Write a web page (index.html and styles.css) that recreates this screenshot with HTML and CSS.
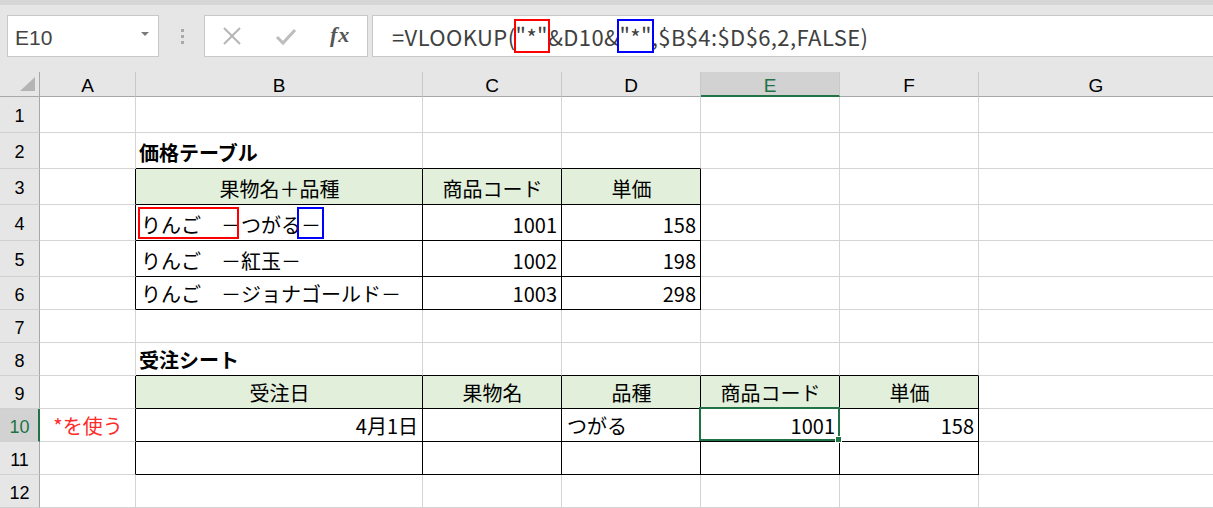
FILE: index.html
```html
<!DOCTYPE html>
<html lang="ja">
<head>
<meta charset="utf-8">
<title>VLOOKUP</title>
<link rel="stylesheet" href="styles.css">
</head>
<body>
<div class="app">
  <div class="topband"></div>
  <div class="fbar">
    <div class="namebox">
      <span class="name">E10</span>
      <svg class="dd" width="8" height="5" viewBox="0 0 8 5"><path d="M0 0H8L4 4Z" fill="#7a7a7a"/></svg>
    </div>
    <div class="dots"><i></i><i></i><i></i></div>
    <div class="btns">
      <svg class="ico" width="20" height="20" viewBox="0 0 20 20"><path d="M2 2L18 18M18 2L2 18" stroke="#b5b5b5" stroke-width="2" fill="none"/></svg>
      <svg class="ico" width="22" height="20" viewBox="0 0 22 20"><path d="M2 10L8 16L20 3" stroke="#bdbdbd" stroke-width="3" fill="none"/></svg>
      <span class="fx">fx</span>
    </div>
    <div class="formula">
      <span class="ftext">=VLOOKUP(<span class="fbox red">"*"</span>&amp;D10&amp;<span class="fbox blue">"*"</span>,$B$4:$D$6,2,FALSE)</span>
    </div>
  </div>
  <div class="sheet">
    <!-- header -->
    <div class="corner"><svg width="18" height="16" viewBox="0 0 18 16"><path d="M17 1V15H2Z" fill="#b4b4b4"/></svg></div>
    <div class="ch">A</div><div class="ch">B</div><div class="ch">C</div><div class="ch">D</div><div class="ch sel">E</div><div class="ch">F</div><div class="ch">G</div>
    <!-- 1 -->
    <div class="rh">1</div><div class="c"></div><div class="c"></div><div class="c"></div><div class="c"></div><div class="c"></div><div class="c"></div><div class="c"></div>
    <!-- 2 -->
    <div class="rh">2</div><div class="c"></div><div class="c bb title">価格テーブル</div><div class="c bb"></div><div class="c bb"></div><div class="c"></div><div class="c"></div><div class="c"></div>
    <!-- 3 -->
    <div class="rh">3</div><div class="c br"></div><div class="c bb br hd">果物名＋品種</div><div class="c bb br hd">商品コード</div><div class="c bb br hd">単価</div><div class="c"></div><div class="c"></div><div class="c"></div>
    <!-- 4 -->
    <div class="rh">4</div><div class="c br"></div><div class="c bb br"><span class="in"><span class="mark redb">りんご　－</span>つがる<span class="mark blueb">－</span></span></div><div class="c bb br num">1001</div><div class="c bb br num">158</div><div class="c"></div><div class="c"></div><div class="c"></div>
    <!-- 5 -->
    <div class="rh">5</div><div class="c br"></div><div class="c bb br">りんご　－紅玉－</div><div class="c bb br num">1002</div><div class="c bb br num">198</div><div class="c"></div><div class="c"></div><div class="c"></div>
    <!-- 6 -->
    <div class="rh s">6</div><div class="c br"></div><div class="c bb br">りんご　－ジョナゴールド－</div><div class="c bb br num">1003</div><div class="c bb br num">298</div><div class="c"></div><div class="c"></div><div class="c"></div>
    <!-- 7 -->
    <div class="rh s">7</div><div class="c"></div><div class="c"></div><div class="c"></div><div class="c"></div><div class="c"></div><div class="c"></div><div class="c"></div>
    <!-- 8 -->
    <div class="rh s">8</div><div class="c"></div><div class="c bb title">受注シート</div><div class="c bb"></div><div class="c bb"></div><div class="c bb"></div><div class="c bb"></div><div class="c"></div>
    <!-- 9 -->
    <div class="rh s">9</div><div class="c br"></div><div class="c bb br hd">受注日</div><div class="c bb br hd">果物名</div><div class="c bb br hd">品種</div><div class="c bb br hd">商品コード</div><div class="c bb br hd">単価</div><div class="c"></div>
    <!-- 10 -->
    <div class="rh s selr">10</div><div class="c br note">*を使う</div><div class="c bb br num">4月1日</div><div class="c bb br"></div><div class="c bb br">つがる</div><div class="c bb br num active">1001<span class="handle"></span></div><div class="c bb br num">158</div><div class="c"></div>
    <!-- 11 -->
    <div class="rh s">11</div><div class="c br"></div><div class="c bb br"></div><div class="c bb br"></div><div class="c bb br"></div><div class="c bb br"></div><div class="c bb br"></div><div class="c"></div>
    <!-- 12 -->
    <div class="rh s">12</div><div class="c"></div><div class="c"></div><div class="c"></div><div class="c"></div><div class="c"></div><div class="c"></div><div class="c"></div>
  </div>
</div>
</body>
</html>
```

FILE: styles.css
```css
* { box-sizing: border-box; }
html, body { margin: 0; padding: 0; }
body {
  width: 1213px;
  height: 508px;
  overflow: hidden;
  background: #ffffff;
  font-family: "Noto Sans CJK JP", "Noto Sans", sans-serif;
}
.app { width: 1213px; }

.topband { height: 5px; background: #d6d6d6; }
.fbar {
  height: 67px;
  background: #e6e6e6;
  display: flex;
  align-items: flex-start;
  padding-top: 10px;
}
.namebox {
  margin-left: 7px;
  width: 152px;
  height: 42px;
  background: #fff;
  border: 1px solid #c9c9c9;
  display: flex;
  align-items: center;
  justify-content: space-between;
  padding: 0 9px 0 7px;
}
.name {
  font-family: "Liberation Sans", Arial, sans-serif;
  font-size: 21px;
  color: #444;
  line-height: 1;
  padding-top: 2px;
}
.dd { margin-top: -4px; }
.dots {
  width: 45px;
  height: 42px;
  display: flex;
  flex-direction: column;
  align-items: center;
  justify-content: center;
  gap: 3px;
  padding-left: 2px;
}
.dots i { display: block; width: 3px; height: 3px; background: #a9a9a9; }
.btns {
  width: 164px;
  height: 42px;
  background: #fff;
  border: 1px solid #c9c9c9;
  display: flex;
  align-items: center;
  padding-left: 17px;
}
.btns .ico:first-child { margin-right: 33px; }
.btns .ico:nth-child(2) { margin-right: 33px; margin-top: 2px; }
.fx {
  font-family: "Liberation Serif", "DejaVu Serif", serif;
  font-style: italic;
  font-weight: bold;
  font-size: 22px;
  color: #555;
  line-height: 1;
  margin-top: -3px;
  letter-spacing: 1px;
}
.formula {
  margin-left: 4px;
  flex: 1;
  height: 42px;
  background: #fff;
  border: 1px solid #c9c9c9;
  border-right: none;
  display: flex;
  align-items: center;
  padding-left: 19px;
}
.ftext {
  font-family: "Noto Sans CJK JP", sans-serif;
  font-size: 22px;
  letter-spacing: 0.4px;
  color: #404040;
  line-height: 30px;
  white-space: nowrap;
}
.fbox { position: relative; }
.fbox::after {
  content: "";
  position: absolute;
  left: -2px;
  right: -2px;
  top: -1px;
  bottom: -1px;
  border: 2px solid;
}
.fbox.red::after { border-color: #ff0000; }
.fbox.blue::after { border-color: #0000ff; }

.sheet {
  display: grid;
  grid-template-columns: 40px 96px 287px 139px 139px 139px 139px 235px;
  grid-template-rows: 25px 36px 36px 36px 36px 36px 33px 33px 33px 33px 33px 33px 33px;
}
.corner {
  background: #e6e6e6;
  border-right: 1px solid #a8a8a8;
  border-bottom: 1px solid #a8a8a8;
  display: flex;
  align-items: flex-end;
  justify-content: flex-end;
  padding: 0 3px 4px 0;
}
.corner svg { display: block; }
.ch {
  background: #e6e6e6;
  border-right: 1px solid #c8c8c8;
  border-bottom: 1px solid #a8a8a8;
  font-family: "Liberation Sans", Arial, sans-serif;
  font-size: 19px;
  color: #000;
  display: flex;
  align-items: flex-end;
  justify-content: center;
  line-height: 19px;
  padding-bottom: 1px;
}
.ch.sel {
  background: #d2d2d2;
  border-bottom: 2px solid #217346;
  color: #217346;
  padding-bottom: 0;
}
.rh {
  background: #e6e6e6;
  border-right: 1px solid #a8a8a8;
  border-bottom: 1px solid #d0d0d0;
  font-family: "Liberation Sans", Arial, sans-serif;
  font-size: 18px;
  color: #000;
  display: flex;
  align-items: center;
  justify-content: center;
  line-height: 18px;
  padding-top: 3px;
}
.rh.selr {
  background: #d2d2d2;
  border-right: 2px solid #217346;
  color: #217346;
  padding-left: 1px;
}
.c {
  border-right: 1px solid #d4d4d4;
  border-bottom: 1px solid #d4d4d4;
  font-size: 20px;
  line-height: 20px;
  color: #000;
  display: flex;
  align-items: flex-end;
  padding: 0 4px 5px 5px;
  white-space: nowrap;
}
.c.bb { border-bottom-color: #000; }
.c.br { border-right-color: #000; }
.c.hd { background: #e2efda; justify-content: center; }
.c.num { justify-content: flex-end; }
.c.title { font-weight: bold; padding-left: 3px; }
.c.note { color: #ff2a2a; justify-content: center; }
.mark { position: relative; }
.mark::after {
  content: "";
  position: absolute;
  top: -3px;
  bottom: 0;
  border: 2px solid;
}
.redb::after { border-color: #ff0000; left: -3px; right: 2px; }
.blueb::after { border-color: #0000ff; left: -4px; right: -3px; }
.c.active { position: relative; }
.c.active::after {
  content: "";
  position: absolute;
  left: -2px;
  top: -2px;
  right: -1px;
  bottom: 0;
  border: 2px solid #217346;
}
.handle {
  position: absolute;
  right: -3px;
  bottom: -2px;
  width: 7px;
  height: 7px;
  background: #217346;
  border: 1px solid #fff;
  z-index: 2;
}
```
